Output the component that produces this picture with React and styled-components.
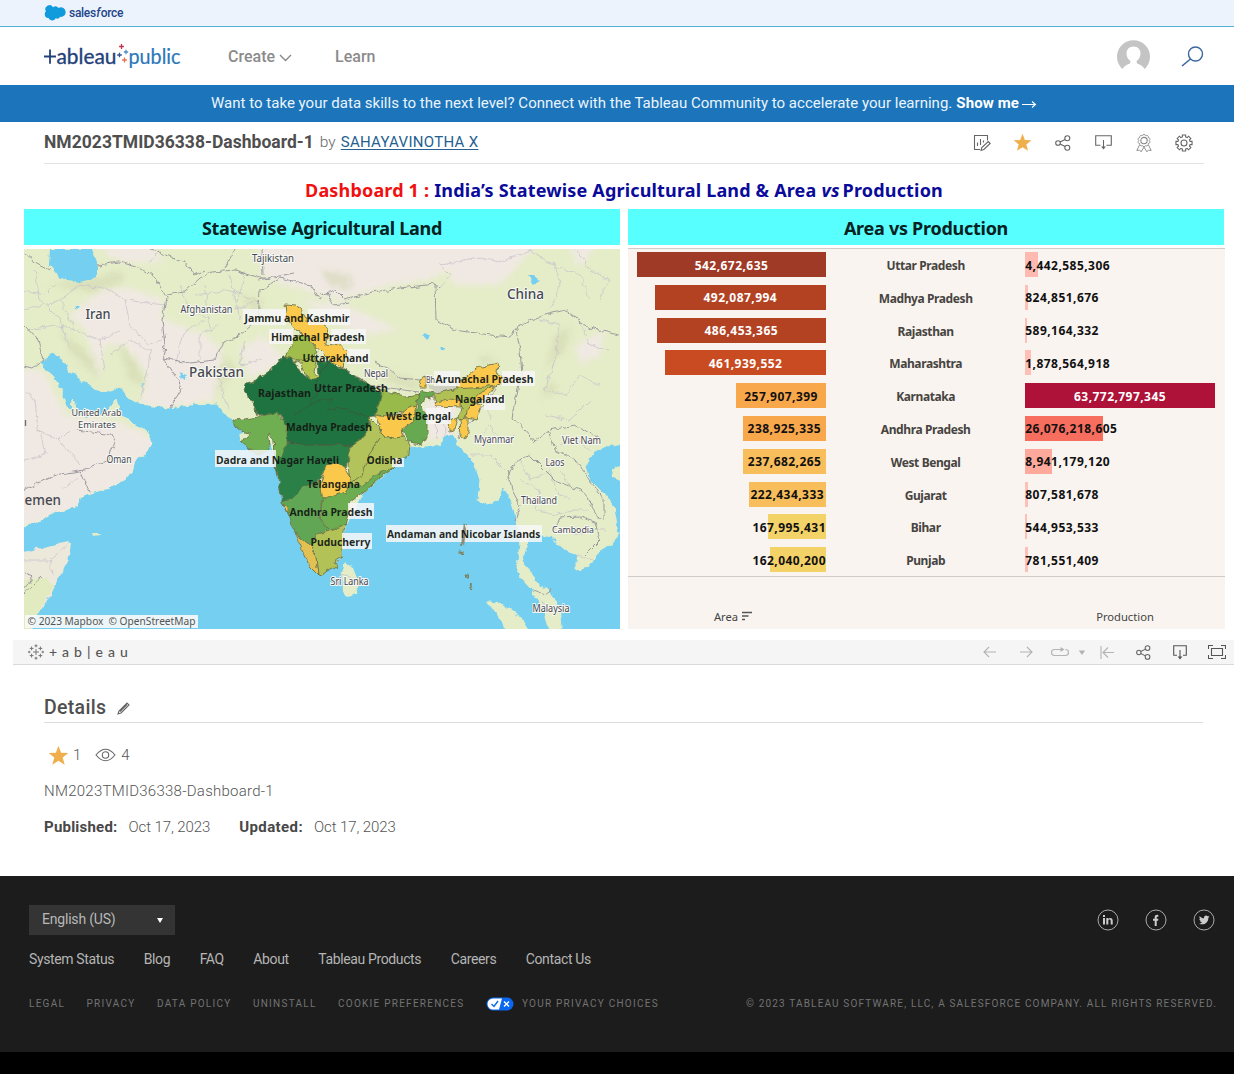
import React from "react";
import styled, { createGlobalStyle } from "styled-components";

const ui = `Roboto, "Liberation Sans", sans-serif`;
const viz = `"Noto Sans", "Open Sans", sans-serif`;

const Global = createGlobalStyle`
  * { box-sizing: border-box; }
  body { margin: 0; background: #fff; font-family: ${ui}; }
`;

const Page = styled.div`
  width: 1234px;
  height: 1074px;
  display: flex;
  flex-direction: column;
  overflow: hidden;
  background: #fff;
`;

const TopBar = styled.div`
  height: 27px;
  flex: none;
  display: flex;
  align-items: center;
  gap: 3px;
  padding: 0 0 1px 44px;
  background: #ecf3fd;
  border-bottom: 1px solid #55b0d6;
`;
const SalesforceName = styled.span`
  font: 500 12px/16px ${ui};
  letter-spacing: -0.3px;
  color: #23468a;
  i { margin: 0 0.5px; }
`;

const Nav = styled.header`
  height: 58px;
  flex: none;
  display: flex;
  align-items: center;
  padding: 1px 30px 0 44px;
`;
const NavLinks = styled.nav`
  display: flex;
  align-items: center;
  gap: 43px;
  margin-left: 47px;
`;
const NavLink = styled.a`
  display: flex;
  align-items: center;
  gap: 4px;
  padding-top: 1px;
  font: 500 16px/20px ${ui};
  color: #8b8b8b;
`;
const NavRight = styled.div`
  margin-left: auto;
  display: flex;
  align-items: center;
  gap: 31px;
`;

const Banner = styled.div`
  height: 37px;
  flex: none;
  display: flex;
  align-items: center;
  justify-content: center;
  gap: 4px;
  padding: 0 0 1px 14px;
  font: 400 15px/20px ${ui};
  letter-spacing: 0.02px;
  color: #eaf4fc;
  background: #1c74bb;
  b { color: #fff; letter-spacing: 0.1px; display: flex; align-items: center; gap: 3px; }
`;

const TitleRow = styled.div`
  height: 42px;
  flex: none;
  margin: 0 30px 0 44px;
  display: flex;
  align-items: center;
  border-bottom: 1px solid #e2e2e2;
  padding-bottom: 2px;
`;
const WorkbookTitle = styled.h1`
  margin: 0;
  font: 700 17.5px/22px ${ui};
  letter-spacing: 0.02px;
  color: #4f4f4f;
`;
const By = styled.span`
  margin: 0 5px 0 6px;
  font: 300 15.5px/22px ${ui};
  color: #666;
`;
const Author = styled.a`
  font: 400 15px/20px ${ui};
  letter-spacing: 0.3px;
  color: #265f92;
  text-decoration: underline;
  text-underline-offset: 2px;
  white-space: nowrap;
`;
const Actions = styled.div`
  margin-left: auto;
  margin-right: 11px;
  padding-top: 2px;
  display: flex;
  align-items: center;
  gap: 22.5px;
`;
const Action = styled.span`
  width: 18px;
  display: flex;
  justify-content: center;
  svg { flex: none; }
`;

const DashTitle = styled.h2`
  height: 45px;
  flex: none;
  margin: 0;
  padding: 6px 0 0 14px;
  display: flex;
  align-items: center;
  justify-content: center;
  gap: 5px;
  font: 700 18px/24px ${viz};
  letter-spacing: 0.17px;
  color: #0a0a9b;
  white-space: nowrap;
  span { color: #f01010; }
  em { margin: 0 -2px 0 0; }
`;

const Panels = styled.div`
  height: 420px;
  flex: none;
  display: flex;
  gap: 8px;
  padding-left: 24px;
`;
const Panel = styled.section`
  width: ${(p) => p.$w}px;
  display: flex;
  flex-direction: column;
`;
const PanelHead = styled.h3`
  height: 36px;
  width: 596px;
  flex: none;
  margin: 0 0 ${(p) => p.$gap}px;
  display: flex;
  align-items: center;
  justify-content: center;
  padding: 1px 0 0;
  font: 700 18px/24px ${viz};
  letter-spacing: -0.27px;
  color: #06211f;
  background: #57fffe;
`;

const Plot = styled.div`
  border-top: 1px solid #cfccc9;
  border-bottom: 1px solid #cfccc9;
  height: 329px;
  padding-top: 3px;
  background: #f9f4f0;
`;
const Footing = styled.div`
  flex: 1;
  display: flex;
  align-items: center;
  padding-top: 27px;
  background: #f9f4f0;
  font: 400 11.2px/16px ${viz};
  color: #444;
`;
const AreaAxis = styled.span`
  width: 210px;
  display: flex;
  justify-content: center;
  align-items: center;
  gap: 4px;
`;
const ProductionAxis = styled.span`
  width: 198px;
  margin-left: 188px;
  text-align: center;
`;
const BarRow = styled.div`
  height: 32.8px;
  display: grid;
  grid-template-columns: 198px 199.3px 199.7px;
  align-items: start;
`;
const Bar = styled.div`
  height: 25px;
  display: flex;
  align-items: center;
  white-space: nowrap;
  justify-content: ${(p) => p.$align};
  justify-self: ${(p) => p.$side};
  font: 700 12px/24px ${viz};
  letter-spacing: 0.45px;
  padding-top: 2px;
  color: ${(p) => p.$ink || "#111"};
  background: ${(p) => p.$fill};
`;
const StateName = styled.div`
  text-align: center;
  font: 700 12px/25px ${viz};
  letter-spacing: -0.4px;
  padding-top: 1px;
  color: #474441;
`;

const Toolbar = styled.div`
  height: 25px;
  flex: none;
  margin: 11px 0 0 13px;
  padding: 0 8px 0 15px;
  display: flex;
  align-items: center;
  justify-content: space-between;
  background: #f5f5f5;
  border-bottom: 1px solid #d9d9d9;
`;
const ToolGroup = styled.div`
  display: flex;
  align-items: center;
  gap: ${(p) => p.$gap}px;
`;
const ToolName = styled.span`
  font: 500 14px/20px Lato, ${ui};
  letter-spacing: 5px;
  color: #555;
`;

const Details = styled.section`
  flex: none;
  height: 211px;
  margin: 0 31px 0 44px;
  padding-top: 29px;
`;
const DetailsHead = styled.div`
  height: 29px;
  display: flex;
  gap: 11px;
  border-bottom: 1px solid #dcdcdc;
  font: 500 19.5px/28px ${ui};
  letter-spacing: 0.3px;
  color: #4f4f4f;
  svg { margin-top: 8px; }
`;
const Stats = styled.div`
  display: flex;
  align-items: center;
  height: 24px;
  margin: 20px 0 0 4px;
  font: 300 15px/20px ${ui};
  color: #555;
  svg + span { margin-left: 4px; }
  span + svg { margin-left: 14px; }
  svg:nth-of-type(2) + span { margin-left: 5px; }
`;
const Description = styled.p`
  margin: 14px 0 0;
  font: 300 15px/20px ${ui};
  letter-spacing: 0.26px;
  color: #555;
`;
const Dates = styled.dl`
  margin: 16px 0 0;
  display: flex;
  font: 300 15px/20px ${ui};
  color: #555;
  dt { font-weight: 700; letter-spacing: 0.22px; margin-right: 11px; color: #484848; }
  dt + dd + dt { letter-spacing: 0.4px; }
  dd { margin: 0 29px 0 0; letter-spacing: -0.1px; }
`;

const Footer = styled.footer`
  flex: none;
  height: 176px;
  padding: 29px 17px 0 29px;
  background: #1c1c1c;
`;
const FooterRow = styled.div`
  display: flex;
  align-items: center;
  justify-content: space-between;
  height: ${(p) => p.$h}px;
`;
const Language = styled.button`
  width: 146px;
  height: 30px;
  border: 0;
  padding: 0 12px 2px 13px;
  display: flex;
  align-items: center;
  justify-content: space-between;
  font: 400 14px/20px ${ui};
  letter-spacing: -0.2px;
  color: #b8b8b8;
  background: #343434;
`;
const Arrow = styled.span`
  width: 0;
  height: 0;
  margin-top: 3px;
  border: 3px solid transparent;
  border-top: 5px solid #fff;
  border-bottom: 0;
`;
const Socials = styled.div`
  display: flex;
  gap: 26px;
  margin-right: 2px;
`;
const Links = styled.div`
  display: flex;
  gap: 29.5px;
  padding-bottom: 2px;
  font: 400 14px/20px ${ui};
  letter-spacing: -0.37px;
  color: #b5b5b5;
`;
const Legal = styled.div`
  display: flex;
  align-items: center;
  gap: 21.5px;
  font: 400 10px/14px ${ui};
  letter-spacing: ${(p) => p.$track}px;
  color: #737373;
`;
const Choices = styled.span`
  display: flex;
  align-items: center;
  gap: 8px;
`;
const Black = styled.div`
  flex: 1;
  background: #000;
`;

/* ---------- icons ---------- */
const Line = ({ w = 18, h = 18, c = "#666", children, vb }) => (
  <svg width={w} height={h} viewBox={vb || `0 0 ${w} ${h}`} fill="none" stroke={c} strokeWidth="1.1">
    {children}
  </svg>
);
const Star = ({ s }) => (
  <svg width={s} height={s} viewBox="0 0 20 20">
    <path d="M10 .8l2.5 6.6 6.9.3-5.4 4.3 1.9 6.8L10 15l-5.9 3.8L6 12 .6 7.7l6.9-.3z" fill="#efaf4d" />
  </svg>
);
const Share = ({ w = 16 }) => (
  <Line w={w} h={w} vb="0 0 16 16">
    <circle cx="3" cy="8" r="2.3" /><circle cx="12.3" cy="3.3" r="2.5" /><circle cx="12.3" cy="12.7" r="2.5" />
    <path d="M5.1 7l5-2.6M5.1 9l5 2.6" />
  </Line>
);
const Download = ({ w = 17, c = "#666" }) => (
  <Line w={w} h="17" vb={`0 0 ${w} 17`} c={c}>
    <path d={`M${w / 2 - 3} 11.3H.7V1.8h${w - 1.4}v9.5H${w / 2 + 3}M${w / 2} 6v8`} />
    <path d={`M${w / 2 - 2.4} 12.5h4.8l-2.4 3z`} fill={c} stroke="none" />
  </Line>
);
const gear = () => {
  let d = "";
  for (let i = 0; i < 8; i++) {
    const pt = (r, a) => `${(9 + r * Math.cos(a)).toFixed(2)} ${(9 + r * Math.sin(a)).toFixed(2)}`;
    const a = (i * Math.PI) / 4;
    d += `${i ? "L" : "M"}${pt(6.3, a - 0.26)}L${pt(8.2, a - 0.2)}L${pt(8.2, a + 0.2)}L${pt(6.3, a + 0.26)}`;
  }
  return d + "Z";
};
const rosette = () => {
  let d = "";
  for (let i = 0; i <= 10; i++) {
    const a = (i * Math.PI) / 5;
    const x = (9 + 5.2 * Math.cos(a)).toFixed(2), y = (6.6 + 5.2 * Math.sin(a)).toFixed(2);
    d += i ? `A1.7 1.7 0 0 1 ${x} ${y}` : `M${x} ${y}`;
  }
  return d;
};
const plus = (x, y, r) => `M${x - r} ${y}h${2 * r}M${x} ${y - r}v${2 * r}`;

const Cloud = () => (
  <svg width="22" height="16" viewBox="0 0 22 16">
    <path fill="#119bdc" d="M9 2.2A4.2 4.2 0 0 1 14.6 3 4.6 4.6 0 0 1 21.6 7.3a4.5 4.5 0 0 1-5.4 4.5 3.4 3.4 0 0 1-4.5 1.4A3.9 3.9 0 0 1 4.5 13 3.5 3.5 0 0 1 .8 9.6 3.7 3.7 0 0 1 1.9 6.3 4.1 4.1 0 0 1 9 2.2z" />
  </svg>
);
const PublicLogo = () => (
  <svg width="137" height="26" viewBox="44 43 137 26" fontFamily="Lato, Roboto, sans-serif" fontSize="20.5">
    <path d="M44 55.5h12M50 48.500v14.200" fill="none" stroke="#24427a" strokeWidth="1.8" />
    <text x="56.5" y="62.5" fill="#24427a" stroke="#24427a" strokeWidth=".35" textLength="60" lengthAdjust="spacingAndGlyphs">ableau</text>
    <text x="128.5" y="62.5" fill="#2b78b9" stroke="#2b78b9" strokeWidth=".2" textLength="52" lengthAdjust="spacingAndGlyphs">public</text>
    <g strokeWidth="1.3" fill="none">
      <path d={plus(121.5, 45.5, 2.4)} stroke="#c2334b" />
      <path d={plus(119.5, 54, 2.3)} stroke="#3a4f8c" />
      <path d={plus(126, 51, 2.2)} stroke="#4c8fc4" />
      <path d={plus(124.5, 59, 2.4)} stroke="#e8734a" />
    </g>
  </svg>
);

/* ---------- map ---------- */
const J = "#fac84b";
const STATES = [
  ["#1f7340", "282,357 290,357 296,364 302,375 312,380 318,378 317,362 330,362 337,368 345,369 358,378 373,387 381,393 383,400 378,405 374,417 370,418 366,436 350,446 300,447 285,444 286,430 280,414 257,416 254,405 244,390 247,383 256,380 268,373"],
  ["#2b8048", "273,440 286,441 300,445 350,445 348,462 345,468 327,465 320,480 303,489 290,500 282,502 278,477 275,460"],
  ["#70ae52", "233,420 253,418 277,413 287,425 287,444 276,462 273,440 268,434 270,445 266,452 258,454 250,450 240,441 250,434 242,433 235,427"],
  [J, "285,304 297,305 303,315 307,322 317,321 327,328 330,335 325,344 340,346 350,353 344,360 343,368 330,362 321,351 310,342 303,333 298,332 290,323 286,313"],
  ["#a0bd4b", "295,338 303,333 312,343 317,352 313,362 300,360 285,357"],
  ["#b2c550", "292,361 316,360 314,372 318,377 312,380 304,374 301,363"],
  ["#98ba4b", "383,390 392,393 405,396 420,394 417,405 409,411 396,413 387,416 375,415"],
  [J, "375,415 387,417 400,414 409,408 416,406 413,421 402,428 403,437 385,439 380,427"],
  ["#67a951", "420,390 435,393 433,399 424,398 421,405 427,418 427,440 420,444 410,442 402,430 413,421 418,405"],
  [J, "420,380 426,377 426,387 419,387"],
  ["#b3c35c", "370,418 380,428 385,439 403,437 409,442 408,455 395,466 380,475 365,485 354,492 350,480 348,466 350,446 366,436"],
  [J, "327,465 337,463 346,470 352,480 346,492 330,499 320,501 319,487"],
  ["#6bad50", "352,482 362,487 375,475 395,466 380,478 363,493 350,503 345,527 327,532 320,523 322,500 346,492"],
  ["#61a654", "282,502 290,500 303,487 319,482 322,500 319,518 329,529 317,535 311,546 295,533 288,516"],
  [J, "284,504 288,507 288,513 285,509"],
  ["#e3c052", "295,533 311,546 316,557 318,575 310,567 302,550"],
  ["#b2c256", "311,546 317,534 330,531 345,525 342,548 342,557 335,562 337,566 327,571 321,576 318,575 316,557"],
  ["#b0c053", "435,393 446,391 459,388 487,384 502,377 494,385 480,395 468,409 464,419 459,417 462,405 435,401"],
  [J, "435,402 450,399 461,402 461,407 436,406"],
  [J, "457,382 467,377 477,368 498,363 497,373 507,378 500,384 484,387 457,389"],
  [J, "472,403 482,392 495,386 488,396 477,402"],
  [J, "467,410 472,403 482,405 477,420 466,418"],
  [J, "460,418 468,417 468,432 464,440 461,438"],
  [J, "448,421 458,417 454,430 449,431"],
];
const BORDERS = [
  "24,252 35,262 50,270M97,265 120,262 140,268 155,278 166,298 162,320 165,345 163,358 175,375 182,388 170,408",
  "166,295 185,292 200,278 212,272 235,270 250,275 262,278 270,278 M150,249 185,262 195,275 205,270 M163,358 190,363 215,360 223,342 240,335 258,320 260,290 280,278 310,285 320,300 M235,249 225,268",
  "258,280 295,273 M262,249 263,275 M24,325 38,340 43,360 33,368 24,366 M24,490 40,482 60,474 85,470 108,460 115,442 112,435 78,430 M80,470 90,493",
  "320,295 335,290 345,300 372,292 400,288 435,284 440,288 M327,292 333,305 348,303 M435,284 436,320 455,330 490,335 510,337 518,325 545,315 565,310 590,328 619,335",
  "375,362 390,370 400,378 420,380 M345,369 370,385 418,392 M516,330 520,350 522,375 515,400 512,418 525,430 535,442 550,430 575,425 600,438",
  "463,418 458,440 473,420 485,405 497,388 M507,480 513,465 530,455 540,465 555,480 580,490 588,500 600,520 M508,470 512,490 520,505 515,520 M553,532 560,518 580,517 595,522 600,540 585,555 M548,430 555,450 575,460 590,480 604,500 604,520",
  "24,589 33,577 24,574 M42,577 24,593 M533,590 545,595 552,590",
];
const PROVINCES = [
  "110,355 130,340 150,350 M105,370 100,340 75,330 60,300 24,310 M60,300 80,285 110,290 125,300 130,325 148,345 162,340 M125,300 165,305 M100,340 120,330 M140,400 148,370 150,350",
  "24,290 45,295 55,285 M30,330 55,325 75,330 M35,270 40,300 60,320 70,350 M180,285 190,310 210,320 M195,295 230,290 255,300 M175,365 185,330 205,320 M200,360 200,335 220,325 M205,285 210,330 M230,275 240,320 M245,275 235,310 260,300",
  "150,262 160,250 M245,340 240,365 262,360 M215,365 225,400 230,410 M24,390 35,400 38,430 60,440 70,430 M24,460 45,455 40,430 M60,440 80,465 M62,490 78,478 M67,545 50,560 24,560 M50,560 52,575",
  "440,288 450,275 440,265 480,258 500,262 530,250 555,265 560,285 550,310 M545,262 580,275 590,300 M575,249 590,270 610,280 600,300 M580,320 590,345 610,350 M540,320 560,325 555,360 545,390 565,395 580,375 600,385 M590,400 570,420 545,415",
  "475,440 490,425 500,440 515,435 M470,455 490,455 505,470 M490,420 485,400 M520,460 530,480 550,470 555,490 570,500 M520,480 540,490 535,510 555,515 575,510 590,510 M560,445 575,440 590,450 M525,500 540,500 M560,470 570,485 M575,535 590,530 605,530 M340,575 355,578 M575,555 592,560 M435,405 437,440 M445,410 446,438 M540,600 552,610",
];
const CASPIAN = "M50 249H92L97 262 97 278 88 280 78 282 60 278 49 265z";
const LAND =
  "M14 239H630V442L607 446 593 453 586 467 590 480 603 493 614 507 618 533 613 543 597 553 588 567 577 570 577 555 568 552 557 543 553 537 542 535 528 537 527 547 522 562 527 567 537 583 547 590 553 597 560 608 563 635H551L545 612 532 590 520 577 517 567 520 545 517 520 512 503 504 487 498 500 487 504 478 500 480 480 474 462 467 455 458 445 453 433 445 437 440 444 427 447 410 445 395 466 363 493 345 527 342 557 318 575 302 550 285 506 277 465 268 434 258 452 240 441 243 425 227 417 217 404 190 405 168 408 140 404 128 398 120 387 110 391 97 390 82 380 70 372 62 358 52 353 40 362 53 378 62 392 67 407 72 412 73 399 78 414 87 418 103 415 117 399 121 414 131 422 147 431 152 441 145 455 135 460 132 472 119 481 109 488 91 493 80 498 78 506 53 513 34 524 14 527z";

const LABELS = [
  ["Tajikistan", 252, 262, 42, 10], ["Iran", 85.5, 319, 25, 13.5], ["China", 507, 299, 37, 14], ["Afghanistan", 180.5, 312.5, 52, 10],
  ["Pakistan", 189, 376.5, 55, 14], ["Nepal", 364, 376.5, 24, 10], ["Bh", 426, 383, 9, 9], ["United Arab", 71.5, 416, 50, 9.5], ["Emirates", 78, 427.5, 38, 9.5],
  ["Oman", 106.5, 463, 25, 10], ["Myanmar", 474, 443, 40, 10], ["Viet Nam", 562, 443.5, 39, 10], ["Laos", 545.5, 465.5, 19, 10],
  ["Thailand", 521, 504, 36, 10], ["Cambodia", 552, 533, 42, 9.8], ["Sri Lanka", 330.5, 585, 38, 10], ["Malaysia", 532.5, 612, 37, 10],
];
const MARKS = [
  ["Jammu and Kashmir", 244.5, 322, 105], ["Himachal Pradesh", 271, 341, 93.5], ["Uttarakhand", 302.5, 361.5, 66],
  ["Uttar Pradesh", 314, 391.5, 74], ["Rajasthan", 258, 397, 53], ["Arunachal Pradesh", 435.5, 382.5, 98], ["Nagaland", 455, 403, 49.5],
  ["West Bengal", 386, 420, 65], ["Madhya Pradesh", 286, 430.5, 86], ["Dadra and Nagar Haveli", 216, 463.5, 123], ["Odisha", 366.5, 463.5, 36],
  ["Telangana", 307, 487.5, 53], ["Andhra Pradesh", 289.5, 516, 83], ["Puducherry", 310.5, 545.5, 60], ["Andaman and Nicobar Islands", 387, 538, 153.5],
];

const IndiaMap = () => (
  <svg width="596" height="380" viewBox="24 249 596 380" fontFamily='"Noto Sans", sans-serif'>
    <defs>
      <filter id="coast" filterUnits="userSpaceOnUse" x="0" y="225" width="650" height="430" colorInterpolationFilters="sRGB">
        <feTurbulence type="fractalNoise" baseFrequency="0.14" numOctaves="2" seed="4" />
        <feDisplacementMap in="SourceGraphic" scale="6" xChannelSelector="R" yChannelSelector="G" />
      </filter>
      <filter id="soft" x="-20%" y="-20%" width="140%" height="140%" colorInterpolationFilters="sRGB"><feGaussianBlur stdDeviation="3" /></filter>
      <clipPath id="land"><path d={LAND} /></clipPath>
    </defs>
    <rect x="24" y="249" width="596" height="380" fill="#75cff0" />
    <g filter="url(#coast)">
      <path d={LAND} fill="#e5edc8" stroke="#e5edc8" />
      <g clipPath="url(#land)">
        <g fill="#f0e9e3" filter="url(#soft)">
          <path d="M100 290L130 288 165 300 160 318 205 335 222 350 215 400 168 410 140 404 148 375 125 345 105 345 100 380 85 330 70 315z" />
          <path d="M10 365L45 372 65 415 110 420 125 425 160 440 140 480 60 520 10 530z" />
          <path d="M260 240H500L495 258 460 262 430 280 390 285 340 300 285 285 262 275z" />
          <path d="M430 240H540L500 285 455 285z M565 240L600 240 580 268z M240 350L262 335 285 360 250 380z M95 245H150L165 262 120 262z M575 345L605 330 600 355 580 365z M300 300L345 305 400 330 360 335z" />
          <path d="M440 390H455V440H428L424 405z" />
        </g>
        <g fill="#cdd2ab" opacity=".5" filter="url(#soft)">
          <path d="M45 285L100 278 120 270 125 280 95 292z M60 330L90 355 100 380 70 352z M118 345L135 360 145 385 130 380z M225 355L235 370 215 395z M240 295L265 300 255 315z M555 335L572 325 565 350 545 370z M390 372L420 382 418 390 380 380z M320 270L350 275 352 290 330 285z M480 355L500 360 480 366z M560 390L540 400 550 380z" />
        </g>
      </g>
      <path d={CASPIAN} fill="#75cff0" />
      <path d="M14 554L45 547 68 541 71 544 68 563 57 582 50 598 38 613 30 635H14z" fill="#ece8da" />
      <path d="M14 580L45 578 55 585 38 613 30 635H14z" fill="#e2ebc0" />
      <path d="M345 562L353 568 359 583 357 593 348 597 343 592 342 573z M487 601L500 603 520 617 532 635H506L502 623z M626 461L612 470 613 477 626 482z M92 533L99 533 101 535 93 536z" fill="#e5edc8" />
      <path d="M74 305L80 306 79 309 75 308z M181 372L187 375 184 380 180 377z M141 383L144 384 142 388z M527 275L534 275 540 281 534 284z M422 334L430 335 427 340z M438 347L447 347 442 351z" fill="#75cff0" />
      <g fill="none">
        {PROVINCES.map((p, i) => <path key={i} d={"M" + p} stroke="#c9c4cb" strokeWidth=".8" />)}
        {BORDERS.map((p, i) => <path key={i} d={"M" + p} stroke="#9d9b9f" strokeWidth="1" />)}
      </g>
      <path d="M427 384L457 386 455 391 435 392z" fill="#cfcfc0" />
    </g>
    <g filter="url(#coast)" stroke="#6d7448" strokeWidth=".9" strokeLinejoin="round">
      {STATES.map(([c, p], i) => <polygon key={i} fill={c} points={p} />)}
      <path fill="none" stroke="#39563d" d="M293 414L310 406 320 400 332 400 328 410 340 408 355 413 370 418M287 441L300 445 350 445M330 362L320 372 318 378 317 392 310 403" />
      <path fill="none" d="M380 438L367 458 362 475 352 482" />
      <path fill="#9d9a86" d="M464 524L467 527 465 540 462 546 461 535zM460 551h2v3h-2zM466 574h2l1 3h-2zM471 584l2 4-1 1-2-4z" strokeWidth=".7" />
    </g>
    <g fill="#f7f7f7" opacity=".86">
      {[[243, 309, 43, 16], [308, 309, 42, 16], [269, 329, 24, 15], [331, 329, 35, 15], [347, 349, 23, 15], [434, 371, 26, 15], [502, 371, 33, 15], [484, 395, 21, 15], [426, 408, 25, 16], [215, 450, 61, 17], [392, 458, 12, 9], [348, 503, 26, 16], [342, 533, 30, 16], [386, 525, 156, 17]].map((r, i) => (
        <rect key={i} x={r[0]} y={r[1]} width={r[2]} height={r[3]} />
      ))}
    </g>
    <path d="M464 523L466 529 464 546 461.500 541z" fill="#8f8c7c" />
    {LABELS.map(([t, x, y, w, s]) => (
      <text key={t} x={x} y={y} fontSize={s} fontWeight={s > 12 ? 500 : 400} textLength={w} lengthAdjust="spacingAndGlyphs" fill="#454850" stroke="#f8f8f4" strokeWidth="2" paintOrder="stroke">{t}</text>
    ))}
    <text x="24.5" y="505" fontSize="13.5" fontWeight="500" textLength="36.500" lengthAdjust="spacingAndGlyphs" fill="#454850">emen</text>
    <text x="24" y="426" fontSize="11" fill="#454850">ı</text>
    {MARKS.map(([t, x, y, w]) => (
      <text key={t} x={x} y={y} fontSize="11.2" fontWeight="700" textLength={w} lengthAdjust="spacingAndGlyphs" fill="#141914" fillOpacity=".94">{t}</text>
    ))}
    <rect x="25" y="615" width="173" height="13" fill="#f6f8f8" opacity=".92" />
    <text x="27.5" y="625" fontSize="10.5" fill="#555" textLength="76" lengthAdjust="spacingAndGlyphs">© 2023 Mapbox</text>
    <text x="108.5" y="625" fontSize="10.5" fill="#555" textLength="87" lengthAdjust="spacingAndGlyphs">© OpenStreetMap</text>
  </svg>
);

/* ---------- data ---------- */
const ROWS = [
  ["Uttar Pradesh", 542672635, "#9f3a26", 4442585306, "#febab1"],
  ["Madhya Pradesh", 492087994, "#b34223", 824851676, "#febfb7"],
  ["Rajasthan", 486453365, "#b34223", 589164332, "#febfb7"],
  ["Maharashtra", 461939552, "#c84b21", 1878564918, "#febfb7"],
  ["Karnataka", 257907399, "#f9a74b", 63772797345, "#ae1238"],
  ["Andhra Pradesh", 238925335, "#f9a74b", 26076218605, "#f76d5e"],
  ["West Bengal", 237682265, "#f9be5c", 8941179120, "#ffa99c"],
  ["Gujarat", 222434333, "#f9be5c", 807581678, "#febfb7"],
  ["Bihar", 167995431, "#f3d268", 544953533, "#febfb7"],
  ["Punjab", 162040200, "#f3d268", 781551409, "#febfb7"],
];
const areaWidth = (v) => (v / 542672635) * 189;
const prodWidth = (v) => Math.max(2, (v / 63772797345) * 189.5);

export default function App() {
  return (
    <Page>
      <Global />
      <TopBar>
        <Cloud />
        <SalesforceName>sales<i>f</i>orce</SalesforceName>
      </TopBar>
      <Nav>
        <PublicLogo />
        <NavLinks>
          <NavLink>Create
            <Line w={13} h={9} c="#888"><path d="M1 2l5.5 5.5L12 2" strokeWidth="1.4" /></Line>
          </NavLink>
          <NavLink>Learn</NavLink>
        </NavLinks>
        <NavRight>
          <svg width="34" height="34" viewBox="0 0 34 34">
            <path fill="#c4c4c4" d="M6.500 29A16.500 16.500 0 1 1 28.500 29Q26.500 25 21 23.500L20.500 21Q24 19 24.500 14Q24.500 6.500 17.500 6.500T10.500 14Q11 19 14.500 21L14 23.500Q8.500 25 6.500 29z" />
          </svg>
          <Line w={23} h={22} c="#3c66a0"><circle cx="14.500" cy="8" r="7" strokeWidth="1.400" /><path d="M9.500 13L1 20" strokeWidth="1.600" /></Line>
        </NavRight>
      </Nav>
      <Banner>
        <span>Want to take your data skills to the next level? Connect with the Tableau Community to accelerate your learning.</span>
        <b>Show me
          <Line w={15} h={9} c="#fff"><path d="M0 5.500h13M10 2.500l3.500 3-3.500 3" /></Line>
        </b>
      </Banner>
      <TitleRow>
        <WorkbookTitle>NM2023TMID36338-Dashboard-1</WorkbookTitle>
        <By>by</By>
        <Author>SAHAYAVINOTHA X</Author>
        <Actions>
          <Action>
            <Line w={18} h={18}>
              <path d="M7 15.500H1.500v-14h13v5M4.500 12V8.500M7.500 11V5M10.500 8.500V6.500" />
              <path d="M8 16.500l.8-3 6.500-6 1.900 2-6.400 6z" />
            </Line>
          </Action>
          <Action><Star s={19} /></Action>
          <Action><Share /></Action>
          <Action><Download w={17} /></Action>
          <Action>
            <Line w={18} h={18} c="#888">
              <path d={rosette()} strokeWidth=".9" /><circle cx="9" cy="6.600" r="3.200" />
              <path d="M4.500 11L1.800 16.500l2.800-.4 1.500 1.800L9 13l2.900 4.900 1.500-1.800 2.800.4L13.500 11" strokeWidth=".9" />
            </Line>
          </Action>
          <Action><Line w={18} h={18}><path d={gear()} /><circle cx="9" cy="9" r="3" /></Line></Action>
        </Actions>
      </TitleRow>
      <DashTitle>
        <span>Dashboard 1 :</span>India’s Statewise Agricultural Land &amp; Area <em>vs</em> Production
      </DashTitle>
      <Panels>
        <Panel $w={596}>
          <PanelHead $gap={4}>Statewise Agricultural Land</PanelHead>
          <IndiaMap />
        </Panel>
        <Panel $w={597}>
          <PanelHead $gap={3}>Area vs Production</PanelHead>
          <Plot>
            {ROWS.map(([name, area, areaFill, prod, prodFill]) => {
              const big = prod > 3e10;
              return (
                <BarRow key={name}>
                  <Bar $side="end" $fill={areaFill} $ink={area > 4e8 ? "#fff" : "#111"} $align={area < 2e8 ? "flex-end" : "center"} style={{ width: areaWidth(area) }}>
                    {area.toLocaleString("en-US")}
                  </Bar>
                  <StateName>{name}</StateName>
                  <Bar $side="start" $fill={prodFill} $ink={big ? "#fff" : "#111"} $align={big ? "center" : "flex-start"} style={{ width: prodWidth(prod) }}>
                    {prod.toLocaleString("en-US")}
                  </Bar>
                </BarRow>
              );
            })}
          </Plot>
          <Footing>
            <AreaAxis>Area
              <Line w={10} h={11} c="#555"><path d="M0 1.500h10M0 5h6.500M0 8.500h3" strokeWidth="1.500" /></Line>
            </AreaAxis>
            <ProductionAxis>Production</ProductionAxis>
          </Footing>
        </Panel>
      </Panels>
      <Toolbar>
        <ToolGroup $gap={5}>
          <Line w={16} h={16} c="#777">
            <path strokeWidth="1" d={plus(8, 8, 3) + plus(8, 1.8, 1.5) + plus(8, 14.2, 1.5) + plus(3.6, 4.4, 1.9) + plus(12.4, 4.4, 1.9) + plus(3.6, 11.6, 1.9) + plus(12.4, 11.6, 1.9) + plus(1.2, 8, 1.2) + plus(14.8, 8, 1.2)} />
          </Line>
          <ToolName>+ab|eau</ToolName>
        </ToolGroup>
        <ToolGroup $gap={21.5}>
          <ToolGroup $gap={17.5}>
            <ToolGroup $gap={24}>
              <Line w={13} h={12} c="#b3b3b3"><path d="M13 6H1M6 1L1 6l5 5" /></Line>
              <Line w={13} h={12} c="#b3b3b3"><path d="M0 6h12M7 1l5 5-5 5" /></Line>
            </ToolGroup>
            <ToolGroup $gap={9}>
              <Line w={18} h={12} c="#b3b3b3"><path d="M11 3.500H3.500a2.500 2.500 0 0 0 0 6h11a2.500 2.500 0 0 0 0-6" /><path d="M9.500 1l4 2.500-4 2.500z" fill="#b3b3b3" stroke="none" /></Line>
              <ToolGroup $gap={14}>
                <Line w={8} h={8} c="none"><path d="M.8 2.500h6.400L4 7z" fill="#b3b3b3" /></Line>
                <ToolGroup $gap={22.5}>
                  <Line w={14} h={13} c="#b3b3b3"><path d="M1 0v13M14 6.500H3M8 1.500l-5 5 5 5" /></Line>
                  <Share w={15} />
                </ToolGroup>
              </ToolGroup>
            </ToolGroup>
          </ToolGroup>
          <Download w={14} c="#555" />
          <Line w={18} h={14} c="#555"><path d="M3.500 3.500h11v7h-11zM.5 4V.5H5M13 .5h4.500V4M17.500 10v3.500H13M5 13.500H.5V10" /></Line>
        </ToolGroup>
      </Toolbar>
      <Details>
        <DetailsHead>Details
          <Line w={13} h={13}><path d="M1 12l1-3 8-8 2 2-8 8zM3 9.500l7-7" /></Line>
        </DetailsHead>
        <Stats>
          <Star s={21} /><span>1</span>
          <Line w={21} h={14}><path d="M1 7Q10.500-4.500 20 7 10.500 18.500 1 7z" /><circle cx="10.500" cy="7" r="3.200" /></Line>
          <span>4</span>
        </Stats>
        <Description>NM2023TMID36338-Dashboard-1</Description>
        <Dates><dt>Published:</dt><dd>Oct 17, 2023</dd><dt>Updated:</dt><dd>Oct 17, 2023</dd></Dates>
      </Details>
      <Footer>
        <FooterRow $h={30}>
          <Language>English (US)<Arrow /></Language>
          <Socials>
            {["in", "f", "t"].map((k) => (
              <svg key={k} width="22" height="22" viewBox="0 0 22 22">
                <circle cx="11" cy="11" r="10" fill="none" stroke="#a8a8a8" />
                {k === "in" && <path fill="#ccc" d="M6 9h2v6.500H6zM6 6h2v2H6zM9.300 9h1.900v.9c1-1.600 4.500-1.400 4.500 1.600v4h-2v-3.600c0-1.800-2.400-1.700-2.400 0v3.600h-2z" />}
                {k === "f" && <path fill="#ccc" d="M9.700 17v-5.200H8V9.800h1.700V8.300c0-1.900 1.200-2.700 3.600-2.400v1.900c-1.100-.1-1.600.1-1.600.9v1.100h1.700l-.3 2h-1.400V17z" />}
                {k === "t" && <path fill="#ccc" d="M16.500 7.600l-1.200 1.300c.2 4.600-4.500 8.100-9.300 5.600 1.200.1 2.200-.2 3.100-.9-1-.1-1.700-.7-2-1.500h.9c-1-.4-1.600-1.200-1.600-2.200l.9.200c-.9-.7-1.200-1.900-.6-2.900 1.200 1.300 2.500 2 4.300 2.100-.4-2.600 2.200-3.500 3.700-2.100l1.400-.5-.8 1.200z" />}
              </svg>
            ))}
          </Socials>
        </FooterRow>
        <FooterRow $h={49}>
          <Links>
            {["System Status", "Blog", "FAQ", "About", "Tableau Products", "Careers", "Contact Us"].map((t) => <span key={t}>{t}</span>)}
          </Links>
        </FooterRow>
        <FooterRow $h={39}>
          <Legal $track={1.25}>
            {["LEGAL", "PRIVACY", "DATA POLICY", "UNINSTALL", "COOKIE PREFERENCES"].map((t) => <span key={t}>{t}</span>)}
            <Choices>
              <svg width="28" height="14" viewBox="0 0 28 14">
                <rect x=".5" y=".5" width="27" height="13" rx="6.500" fill="#0b66f0" />
                <path d="M7 1.500h9L13 12.500H7a5.500 5.500 0 0 1 0-11z" fill="#fff" />
                <path d="M5.500 7l2.500 2.500L12 4" fill="none" stroke="#0b66f0" strokeWidth="1.400" />
                <path d="M18 4.500l5 5M23 4.500l-5 5" stroke="#fff" strokeWidth="1.400" />
              </svg>
              YOUR PRIVACY CHOICES
            </Choices>
          </Legal>
          <Legal $track={1.16}>© 2023 TABLEAU SOFTWARE, LLC, A SALESFORCE COMPANY. ALL RIGHTS RESERVED.</Legal>
        </FooterRow>
      </Footer>
      <Black />
    </Page>
  );
}
